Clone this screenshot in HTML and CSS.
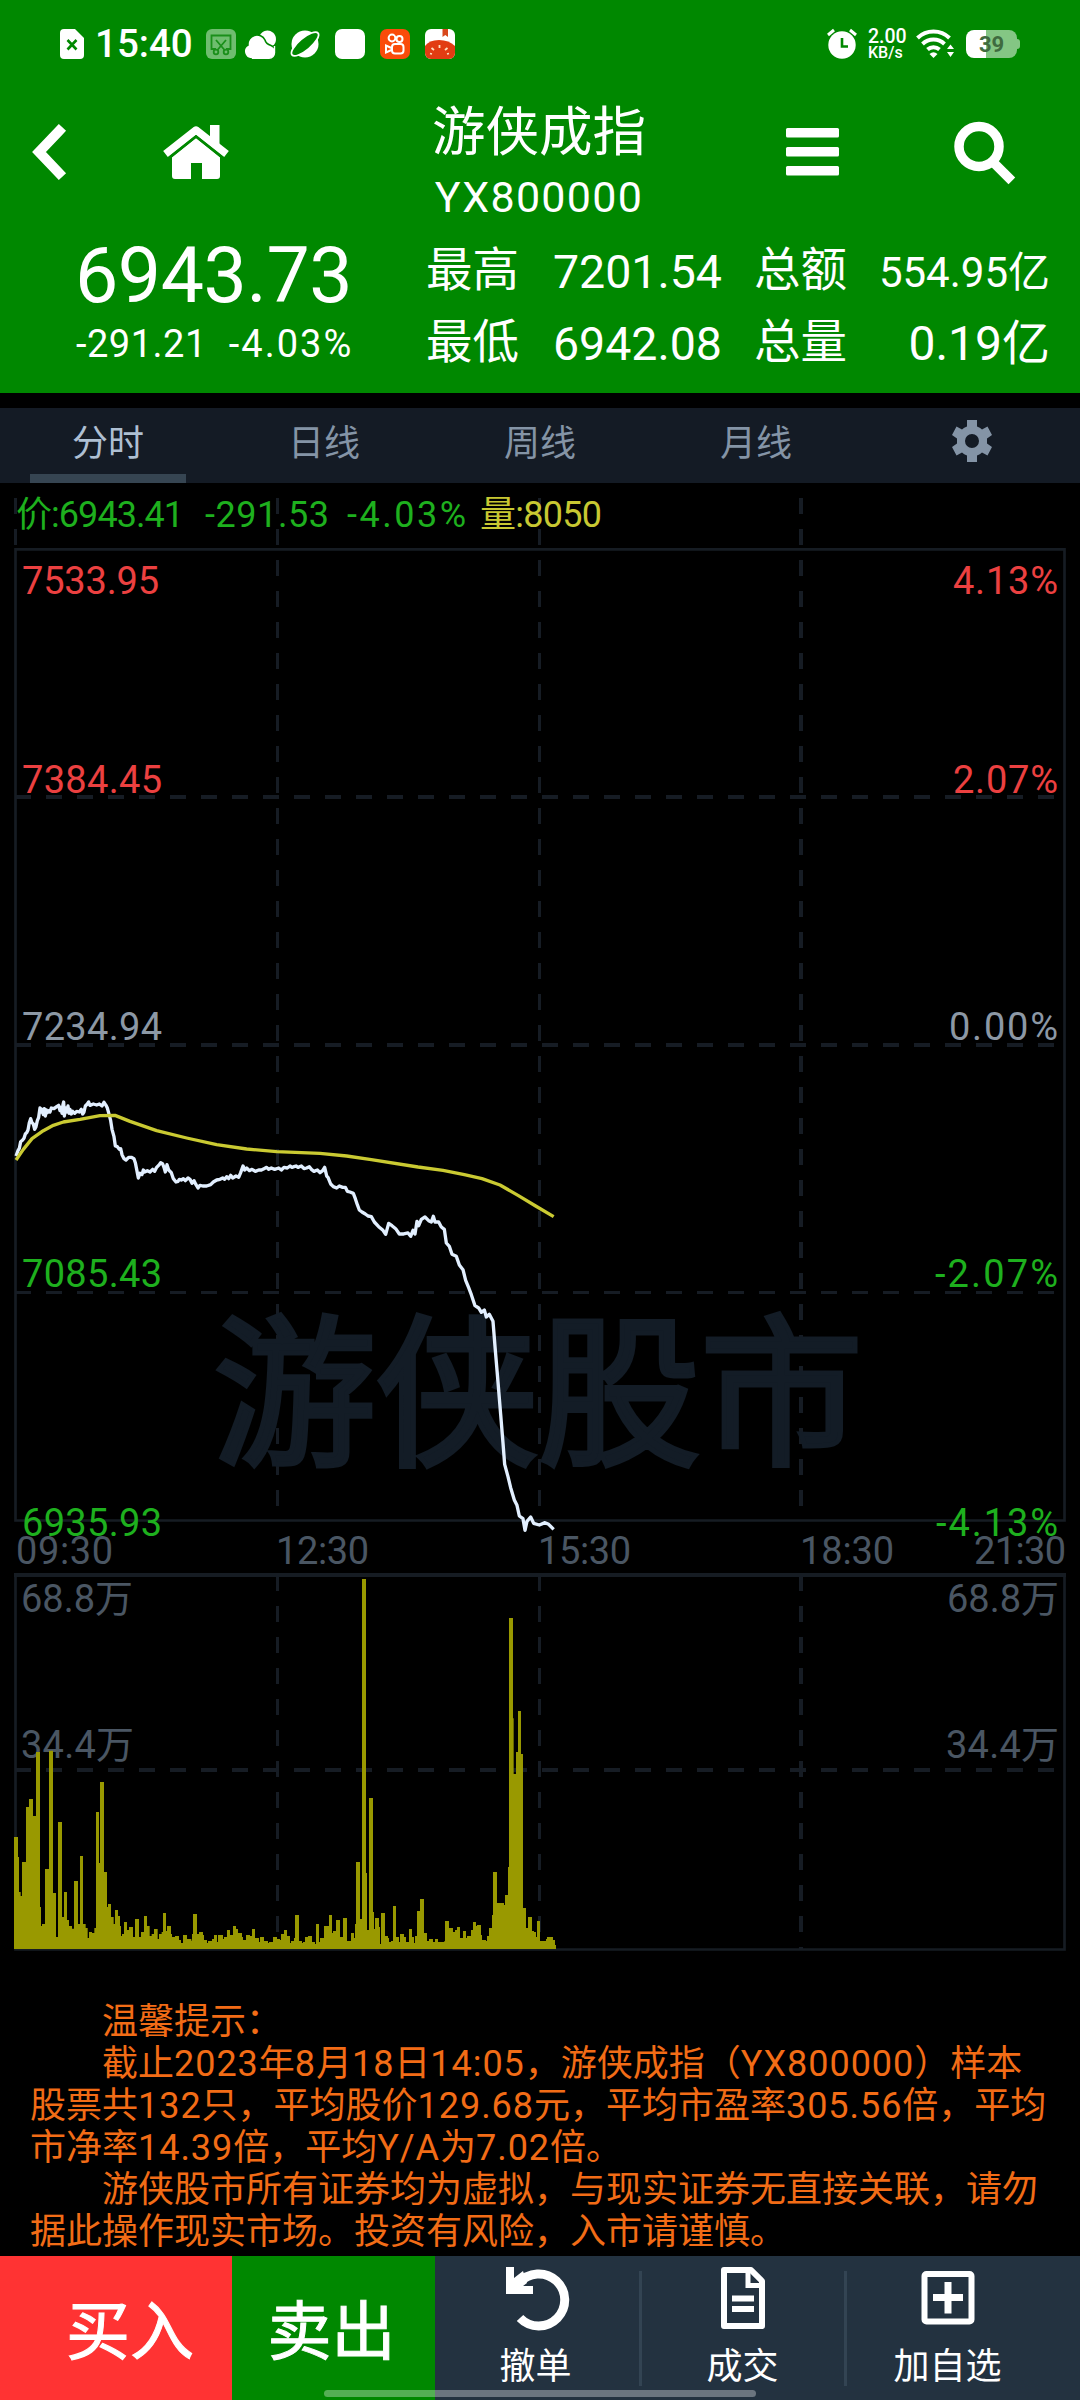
FILE: index.html
```html
<!DOCTYPE html>
<html lang="zh-CN">
<head>
<meta charset="utf-8">
<title>游侠成指 YX800000</title>
<link rel="stylesheet" href="styles.css">
</head>
<body>
<div class="app">
  <header class="header">
    <div class="status">
      <div class="status-left">
        <svg class="sim" viewBox="0 0 24 30"><path d="M4 0H15L24 9V26a4 4 0 0 1-4 4H4a4 4 0 0 1-4-4V4a4 4 0 0 1 4-4z" fill="#fff"/><path d="M7.500 11l9 9.500M16.500 11l-9 9.500" stroke="#080" stroke-width="2.600"/></svg>
        <span class="clock">15:40</span>
        <div class="status-icons">
          <svg viewBox="0 0 30 30"><rect width="30" height="30" rx="6" fill="#6fbd6f"/><g fill="none" stroke="#1a8f1a" stroke-width="1.800"><path d="M10 20H5.500V6.500h19V20H20M10 11l9 10.500M20 11l-9 10.500"/><circle cx="10" cy="23" r="2.300"/><circle cx="20" cy="23" r="2.300"/></g></svg>
          <svg viewBox="0 0 30 30"><path d="M15 6a8.500 8.500 0 1 1 13 10.500L24 18z" fill="#fff"/><path d="M7 30a7.500 7.500 0 0 1-4-14A9 9 0 0 1 20 11q1 4 6 5.500A7 7 0 0 1 23 30z" fill="#fff" stroke="#080" stroke-width="1.600"/><path d="M7 29.300h17a5.500 5.500 0 0 0 5.500-6V17" fill="none" stroke="#fff" stroke-width="1.400"/></svg>
          <svg viewBox="0 0 30 30"><circle cx="15" cy="15" r="13.500" fill="#fff"/><ellipse cx="15" cy="15" rx="16.500" ry="6" transform="rotate(-40 15 15)" fill="#080"/><ellipse cx="15" cy="15" rx="17" ry="6" transform="rotate(-40 15 15)" fill="none" stroke="#fff" stroke-width="1.800"/><path d="M7 19Q13 8 23 7.500 18 20 7.500 22z" fill="#080"/></svg>
          <svg viewBox="0 0 30 30"><rect width="30" height="30" rx="7" fill="#fff"/></svg>
          <svg viewBox="0 0 30 30"><rect width="30" height="30" rx="7" fill="#fa4b0a"/><g fill="none" stroke="#fff" stroke-width="2"><circle cx="12" cy="9" r="3.400"/><circle cx="19.500" cy="10" r="3"/><rect x="12" y="15" width="11.500" height="9.500" rx="3"/><path d="M11.500 19L6 16.500v7l5.500-2.500"/></g></svg>
          <svg viewBox="0 0 30 30"><rect width="30" height="30" rx="6" fill="#fff"/><path d="M17.500 0h5.500v8l-2.700-2-2.800 2z" fill="#d8481c"/><path d="M0 17Q4 11 14 11t16 6v7a6 6 0 0 1-6 6H6a6 6 0 0 1-6-6z" fill="#e23c12"/><path d="M7 25l-2-.5M9 21l-2.500-2M14.500 19v-3M20 21l2.500-2M22 25l2-.5" stroke="#ffe0c0" stroke-width="1.800"/></svg>
        </div>
      </div>
      <div class="status-right">
        <svg class="alarm" viewBox="0 0 30 30"><circle cx="15" cy="16" r="13.700" fill="#fff"/><path d="M1 6l6-5M29 6l-6-5" stroke="#fff" stroke-width="3"/><path d="M15 9v8.500h6" fill="none" stroke="#080" stroke-width="2.600"/></svg>
        <div class="speed"><span>2.00</span><span class="unit">KB/s</span></div>
        <svg class="wifi" viewBox="0 0 38 28"><g fill="none" stroke="#fff" stroke-width="4"><path d="M1.500 8a23 23 0 0 1 32 0"/><path d="M6.500 14a16 16 0 0 1 22 0"/><path d="M11.500 19.500a9 9 0 0 1 12 0"/></g><path d="M13.500 24q4-3.500 8 0l-4 4zM31 19h7l-3.500-4.500zM31 22h7l-3.500 5z" fill="#fff"/></svg>
        <div class="battery"><span>39</span></div>
      </div>
    </div>

    <nav class="nav">
      <svg class="back" width="34" height="54" viewBox="0 0 34 54"><path d="M27 6L7 27l20 21" fill="none" stroke="#fff" stroke-width="10" stroke-linecap="square" stroke-linejoin="miter"/></svg>
      <svg width="70" height="54" viewBox="0 0 70 54"><path d="M11 32L35 13l24 19v19q0 3-3 3H41V38H30v16H14q-3 0-3-3z" fill="#fff"/><path d="M4.500 29L35 5l30.500 24" fill="none" stroke="#fff" stroke-width="7.500" stroke-linejoin="round"/><path d="M49 0h9.500v21L49 13z" fill="#fff"/><path d="M7 34L35 11.500 63 34" fill="none" stroke="#080" stroke-width="2.400"/></svg>
      <div class="title"><h1>游侠成指</h1><p>YX800000</p></div>
      <svg width="53" height="48" viewBox="0 0 53 48"><g fill="#fff"><rect width="53" height="9.500" rx="1.500"/><rect y="19" width="53" height="9.500" rx="1.500"/><rect y="38" width="53" height="9.500" rx="1.500"/></g></svg>
      <svg width="62" height="62" viewBox="0 0 62 62"><circle cx="25" cy="25.500" r="20" fill="none" stroke="#fff" stroke-width="9.500"/><path d="M42 44l12.500 12.500" stroke="#fff" stroke-width="9.500" stroke-linecap="square"/></svg>
    </nav>

    <section class="quote">
      <div class="last">
        <div class="last-price">6943.73</div>
        <div class="last-change"><span>-291.21</span><span class="percent">-4.03%</span></div>
      </div>
      <dl class="stats">
        <dt>最高</dt><dd class="high">7201.54</dd><dt>总额</dt><dd class="amount">554.95亿</dd>
        <dt>最低</dt><dd class="low">6942.08</dd><dt>总量</dt><dd class="volume">0.19亿</dd>
      </dl>
    </section>
  </header>

  <div class="tabs">
    <a class="tab active">分时</a>
    <a class="tab">日线</a>
    <a class="tab">周线</a>
    <a class="tab">月线</a>
    <a class="tab gear"><svg width="40" height="42" viewBox="0 0 40 42"><path fill="#8494a6" fill-rule="evenodd" d="M15 0h10v6.500q3 1 5 3l5.500-3L40 15l-5 3.500v5L40 27l-4.500 8.500-5.500-3q-2 2-5 3V42H15v-6.500q-3-1-5-3l-5.500 3L0 27l5-3.500v-5L0 15l4.500-8.500 5.500 3q2-2 5-3zM20 14a7 7 0 1 0 0 14 7 7 0 0 0 0-14z"/></svg></a>
  </div>

  <svg class="chart" viewBox="0 483 1080 1497">
    <!-- grid -->
    <g class="frame">
      <path d="M15.500 549.300H1064.500V1520.500H15.500z"/>
      <path d="M15.500 1575V1949.500H1064.500V1575"/>
      <path d="M14 1575H1066" stroke-width="4"/>
    </g>
    <g class="dash" stroke-dasharray="16 15">
      <path d="M15.500 498V548" />
      <path d="M277.500 498V1507M539.500 498V1507"/>
      <path d="M801 498V1507" stroke-width="4"/>
      <path d="M15 797H1062M15 1045H1062M15 1770H1062" stroke-width="4"/>
      <path d="M15 1292.500H1062"/>
      <path d="M277.500 1575V1949M539.500 1575V1949"/>
      <path d="M801 1575V1949" stroke-width="4"/>
    </g>
    <text class="watermark" x="213" y="1452" textLength="650">游侠股市</text>

    <!-- readout -->
    <g class="readout">
      <text class="green" x="16" y="527" textLength="168">价:6943.41</text>
      <text class="green" x="205" y="527" textLength="124">-291.53</text>
      <text class="green" x="347" y="527" textLength="119">-4.03%</text>
      <text class="yellow" x="480" y="527" textLength="122">量:8050</text>
    </g>

    <!-- axis labels -->
    <g class="axis">
      <text class="red" x="22" y="593.500" textLength="137">7533.95</text>
      <text class="red" x="22" y="792.500" textLength="140">7384.45</text>
      <text class="flat" x="22" y="1039.500" textLength="140">7234.94</text>
      <text class="green" x="22" y="1287" textLength="140">7085.43</text>
      <text class="green" x="22" y="1535.500" textLength="140">6935.93</text>
      <text class="red" x="953" y="593.500" textLength="105">4.13%</text>
      <text class="red" x="953" y="792.500" textLength="105">2.07%</text>
      <text class="flat" x="949" y="1039.500" textLength="109">0.00%</text>
      <text class="green" x="935" y="1287" textLength="123">-2.07%</text>
      <text class="green" x="936" y="1535.500" textLength="122">-4.13%</text>
    </g>
    <g class="axis dim">
      <text x="16" y="1564" textLength="97">09:30</text>
      <text x="276" y="1564" textLength="93">12:30</text>
      <text x="538" y="1564" textLength="93">15:30</text>
      <text x="800" y="1564" textLength="94">18:30</text>
      <text x="974" y="1564" textLength="92">21:30</text>
      <text x="21" y="1612" textLength="112">68.8万</text>
      <text x="21" y="1758" textLength="113">34.4万</text>
      <text x="947" y="1612" textLength="112">68.8万</text>
      <text x="946" y="1758" textLength="113">34.4万</text>
    </g>

    <!-- volume bars -->
    <path class="bars" transform="translate(0 1740) scale(.33333)" d="M42 627V291H54V351H57V456H62V468H66V366H78V201H87V177H99V228H108V36H120V501H123V558H126V552H135V387H147V32H159V459H168V591H174V246H186V531H192V456H201V540H207V558H216V566H222V423H234V552H240V348H249V552H257V564H263V594H267V576H276V579H283V564H288V216H297V369H300V126H312V396H321V501H324V492H333V531H341V552H345V510H354V528H360V558H363V588H366V582H372V546H381V570H387V561H399V591H405V537H417V591H423V576H432V528H441V558H449V588H455V582H462V567H473V597H477V582H485V576H489V519H498V573H501V558H513V582H516V591H525V588H537V600H543V609H549V585H561V597H574V602H576V582H579V522H591V582H597V576H609V585H612V600H621V609H624V603H636V597H642V585H651V606H654V585H669V597H672V591H681V570H690V585H699V558H708V567H714V579H726V591H729V600H738V585H750V588H756V567H765V594H777V606H780V591H792V603H804V609H807V606H819V591H831V597H840V600H843V582H852V570H861V588H870V609H873V603H882V594H885V525H897V603H906V609H909V606H915V591H924V588H936V606H945V612H948V552H957V606H960V594H972V558H987V525H996V579H999V573H1008V540H1020V591H1029V534H1041V603H1053V579H1062V594H1065V552H1068V366H1080V537H1086V-483H1098V399H1101V570H1107V174H1119V516H1122V567H1125V534H1137V561H1140V612H1143V519H1155V588H1164V594H1167V606H1173V603H1179V498H1188V591H1197V606H1200V582H1212V591H1218V606H1227V567H1236V591H1242V609H1245V588H1251V513H1260V477H1272V579H1281V603H1287V597H1299V606H1305V597H1314V606H1333V603H1335V543H1347V564H1359V576H1365V570H1371V561H1380V594H1389V573H1398V594H1401V588H1413V570H1419V546H1428V558H1431V555H1443V585H1446V600H1458V603H1461V588H1467V564H1476V525H1479V396H1491V489H1512V495H1515V465H1524V381H1527V-366H1539V-65H1541V102H1548V36H1554V-87H1563V42H1569V504H1578V564H1584V531H1596V573H1602V576H1608V591H1611V543H1620V603H1638V597H1641V591H1659V600H1665V615H1668V627Z"/>

    <!-- price and average lines -->
    <g class="lines" transform="translate(0 1080) scale(.33333)">
      <polyline class="price" points="48,228 54,212 58,205 62,185 68,180 72,175 76,162 80,158 84,150 88,128 92,116 96,128 100,132 104,148 108,140 112,122 116,112 120,84 123,96 126,88 130,104 133,86 136,108 139,90 142,98 146,92 150,96 154,84 162,86 170,80 176,76 180,92 183,82 186,100 189,74 191,66 193,108 197,84 200,96 204,78 207,100 210,88 214,102 218,94 224,100 230,94 238,96 244,88 248,102 252,96 256,78 262,72 266,66 270,76 280,72 290,75 298,72 306,78 312,67 318,76 322,84 328,106 332,122 336,148 342,170 346,198 352,200 358,208 362,206 366,224 372,236 378,240 386,232 394,232 402,236 406,248 410,268 415,294 420,280 426,284 430,270 434,276 442,272 450,276 458,268 464,274 470,262 478,254 482,248 488,252 492,262 496,276 501,254 506,270 514,278 520,296 528,306 534,304 538,298 544,300 550,296 556,302 564,294 570,298 576,310 582,302 588,314 594,324 600,316 608,318 620,318 632,314 640,306 650,300 660,298 668,294 674,298 680,290 686,296 692,286 698,294 708,288 716,292 722,278 729,258 734,270 740,264 748,272 756,268 766,274 776,270 784,270 792,266 800,262 806,268 814,264 824,268 836,264 844,270 852,262 862,264 870,258 876,262 882,260 888,258 894,262 904,258 912,266 920,264 928,260 934,268 942,274 952,270 960,278 968,272 974,262 980,288 984,292 992,312 1000,320 1010,324 1018,318 1028,322 1036,322 1042,334 1050,336 1060,340 1066,356 1072,374 1078,390 1086,396 1096,402 1104,408 1114,410 1123,426 1136,440 1149,451 1157,463 1166,430 1176,437 1187,446 1198,462 1211,462 1224,459 1232,469 1239,451 1245,462 1251,424 1256,437 1264,418 1275,411 1286,422 1294,426 1300,409 1305,426 1316,426 1324,441 1333,448 1339,489 1348,499 1356,523 1369,529 1378,555 1389,569 1397,601 1406,623 1414,644 1425,677 1436,684 1444,697 1453,690 1459,711 1468,703 1479,724 1485,799 1494,906 1502,1003 1509,1089 1514,1153 1524,1190 1532,1223 1543,1260 1551,1276 1558,1308 1569,1316 1575,1351 1581,1324 1592,1311 1601,1330 1618,1335 1635,1328 1646,1333 1661,1348"/>
      <polyline class="average" points="48,240 70,208 96,176 130,152 160,136 190,126 240,118 300,107 345,106 390,124 470,152 560,174 650,194 740,207 830,215 960,220 1040,228 1114,239 1254,261 1329,271 1393,284 1446,296 1500,315 1554,346 1607,378 1661,410"/>
    </g>
  </svg>

  <section class="notice">
    <p class="indent">温馨提示：</p>
    <p class="indent">截止<b>2023</b>年<b>8</b>月<b>18</b>日<b>14:05</b>，游侠成指（<b>YX800000</b>）样本</p>
    <p>股票共<b>132</b>只，平均股价<b>129.68</b>元，平均市盈率<b>305.56</b>倍，平均</p>
    <p>市净率<b>14.39</b>倍，平均<b>Y/A</b>为<b>7.02</b>倍。</p>
    <p class="indent">游侠股市所有证券均为虚拟，与现实证券无直接关联，请勿</p>
    <p>据此操作现实市场。投资有风险，入市请谨慎。</p>
  </section>

  <footer class="actions">
    <a class="trade buy">买入</a>
    <a class="trade sell">卖出</a>
    <a class="tool undo">
      <svg width="60" height="62" viewBox="0 0 60 62"><path d="M13 17A26 26 0 1 1 14 52" transform="translate(0 -1)" fill="none" stroke="#fff" stroke-width="9"/><path d="M0 0h8v11l9-7 4 12-4 3h10v8H0z" fill="#fff"/></svg>
      <span>撤单</span>
    </a>
    <a class="tool">
      <svg width="46" height="62" viewBox="0 0 46 62"><path d="M4 3H31L42 14V59H4z" fill="none" stroke="#fff" stroke-width="6" stroke-linejoin="round"/><path d="M28 4v14.500h14" fill="none" stroke="#fff" stroke-width="5"/><path d="M12 31.500H34M12 42H34" stroke="#fff" stroke-width="6"/></svg>
      <span>成交</span>
    </a>
    <a class="tool">
      <svg width="54" height="62" viewBox="0 0 54 62"><rect x="3.500" y="7" width="47" height="47.500" rx="2" fill="none" stroke="#fff" stroke-width="6"/><path d="M12 30.500H42M27 15V46.500" stroke="#fff" stroke-width="7"/></svg>
      <span>加自选</span>
    </a>
    <div class="home-bar"></div>
  </footer>
</div>
</body>
</html>
```
FILE: styles.css
```css
* { box-sizing: border-box; margin: 0; padding: 0; }
body { background: #000; color: #fff; font-family: Roboto, "Noto Sans CJK SC", sans-serif; }
svg { display: block; flex: none; overflow: visible; }
.app { width: 1080px; height: 2400px; display: flex; flex-direction: column; overflow: hidden; }

.header { height: 393px; background: #080; flex: none; }
.status { height: 77px; padding: 11px 60px 0; display: flex; justify-content: space-between; align-items: center; }
.status-left, .status-right, .status-icons { display: flex; align-items: center; }
.sim { width: 24px; height: 30px; }
.clock { width: 99px; margin: 0 12px 0 11px; font-size: 38.500px; line-height: 40px; font-weight: 500; }
.status-icons { gap: 15px; }
.status-icons svg { width: 30px; height: 30px; }
.status-icons svg:nth-child(2) { margin-left: -6px; }
.alarm { width: 30px; height: 30px; }
.speed { width: 38px; margin: 0 10px 0 11px; display: flex; flex-direction: column; font-size: 19.500px; line-height: 17px; font-weight: 500; white-space: nowrap; }
.speed .unit { font-size: 16px; line-height: 16px; }
.wifi { width: 38px; height: 28px; }
.battery { position: relative; width: 51px; height: 28px; margin: 0 3px 0 12px; border-radius: 8px; background: linear-gradient(90deg, #fff 20px, #84c684 20px); color: #3f6b3f; font-size: 22px; line-height: 29px; font-weight: 700; text-align: center; }
.battery::after { content: ""; position: absolute; left: 51px; top: 9px; width: 3px; height: 10px; border-radius: 0 3px 3px 0; background: #84c684; }

.nav { height: 150px; display: grid; grid-template-columns: 98px 196px 490px 57px 239px; align-items: center; justify-items: center; }
.nav > svg:last-child { margin-left: 48px; }
.title { padding-top: 21px; text-align: center; }
.title h1 { font-size: 53.500px; line-height: 68px; font-weight: 400; }
.title p { font-size: 43px; line-height: 60px; letter-spacing: 1.300px; }

.quote { display: flex; height: 166px; }
.last { width: 426px; padding: 4px 0 0 75px; }
.last-price { font-size: 77px; line-height: 91px; letter-spacing: -.4px; }
.last-change { display: flex; gap: 22px; padding-left: 1px; font-size: 38px; line-height: 44px; letter-spacing: .5px; }
.percent { letter-spacing: 2px; }
.stats { width: 624px; padding-top: 7px; display: grid; grid-template-columns: 94px 202px 125px 203px; grid-auto-rows: 72px; line-height: 72px; font-size: 46.500px; white-space: nowrap; }
.stats dt:nth-of-type(even) { text-align: right; }
.stats dd { text-align: right; padding-top: 4px; line-height: 68px; }
.stats .amount { font-size: 42px; padding-top: 5px; }
.stats .volume { font-size: 48px; }

.tabs { height: 75px; margin-top: 15px; flex: none; display: grid; grid-template-columns: repeat(5, 216px); background: #141b25; }
.tab { display: flex; justify-content: center; align-items: center; padding-bottom: 4px; color: #8494a6; font-size: 36px; line-height: 60px; position: relative; }
.tab.gear { padding-bottom: 10px; }
.tab.active { color: #aebfd2; }
.tab.active::after { content: ""; position: absolute; left: 30px; right: 30px; bottom: 0; height: 9px; background: #364552; }

.chart { width: 1080px; height: 1497px; }
.frame { fill: none; stroke: #161c23; stroke-width: 2.700; }
.dash { fill: none; stroke: #161c24; stroke-width: 3; }
.watermark { font-size: 163px; fill: #131c26; stroke: #131c26; stroke-width: 5px; }
.readout { font-size: 36px; }
.axis { font-size: 38px; }
.green { fill: #1eb01e; }
.yellow { fill: #c8c832; }
.red { fill: #ec4040; }
.flat { fill: #8c98a5; }
.dim { fill: #4a5663; }
.bars { fill: #990; }
.lines polyline { fill: none; stroke-linejoin: round; }
.lines .price { stroke: #e2efff; stroke-width: 10; }
.lines .average { stroke: #caca32; stroke-width: 10; }

.notice { height: 276px; padding: 21px 0 0 30px; color: #f26c16; font-size: 36px; line-height: 42px; white-space: nowrap; flex: none; }
.notice .indent { padding-left: 72px; }
.notice b { font-weight: 400; letter-spacing: .95px; }

.actions { position: relative; height: 144px; flex: none; display: flex; background: #233240; }
.trade { display: flex; align-items: center; justify-content: center; font-size: 64px; line-height: 80px; padding-top: 10px; -webkit-text-stroke: 1px #fff; }
.buy { width: 232px; padding-left: 28px; background: #f33; }
.sell { width: 203px; padding-right: 4px; background: #080; }
.tool { width: 205px; display: flex; flex-direction: column; align-items: center; padding-top: 11px; font-size: 36px; line-height: 44px; position: relative; }
.tool.undo { padding-right: 4px; }
.tool span { margin-top: 16px; }
.tool + .tool::before { content: ""; position: absolute; left: -1px; top: 15px; width: 3px; height: 115px; background: #334453; }
.home-bar { position: absolute; left: 324px; top: 134px; width: 432px; height: 7px; border-radius: 4px; background: rgba(255, 255, 255, .33); }
```
